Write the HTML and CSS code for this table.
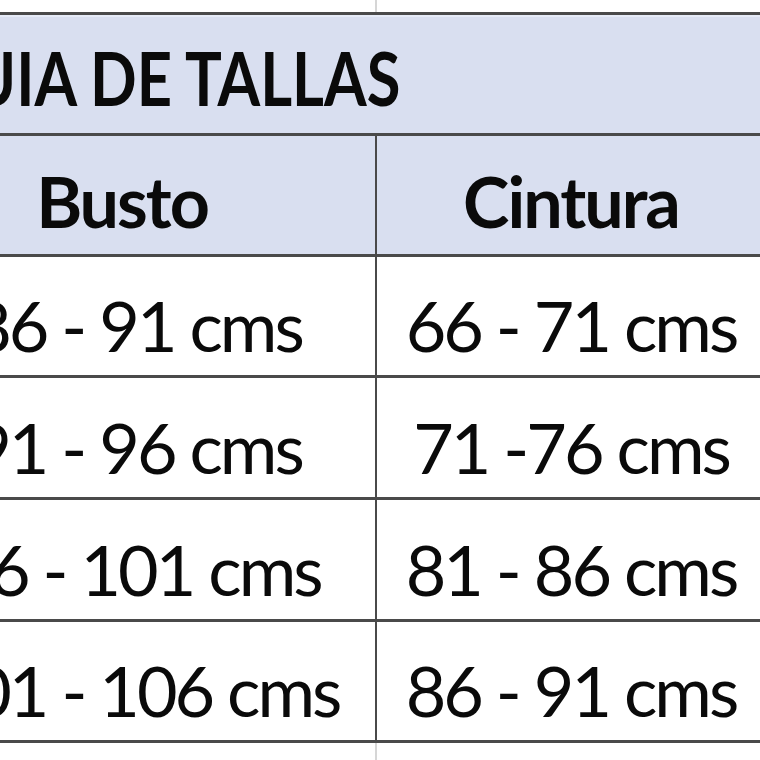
FILE: index.html
```html
<!DOCTYPE html>
<html lang="es">
<head>
<meta charset="utf-8">
<title>Guia de tallas</title>
<link rel="stylesheet" href="styles.css">
</head>
<body>
<div class="page">
  <div class="sheet">
    <div class="cell title"><span class="title-text">GUIA DE TALLAS</span></div>
    <div class="cell head head-a">Busto</div>
    <div class="cell head">Cintura</div>
    <div class="cell data">86 - 91 cms</div>
    <div class="cell data">66 - 71 cms</div>
    <div class="cell data">91 - 96 cms</div>
    <div class="cell data">71 -76 cms</div>
    <div class="cell data">96 - 101 cms</div>
    <div class="cell data">81 - 86 cms</div>
    <div class="cell data">101 - 106 cms</div>
    <div class="cell data">86 - 91 cms</div>
  </div>
</div>
</body>
</html>
```
FILE: styles.css
```css
html, body {
  margin: 0;
  padding: 0;
  background: #ffffff;
  overflow: hidden;
}

.page {
  width: 760px;
  height: 760px;
  overflow: hidden;
  background: linear-gradient(to right, transparent 375px, #d6d6d6 375px, #d6d6d6 377px, transparent 377px);
  padding-top: 12px;
  box-sizing: border-box;
}

.sheet {
  display: grid;
  grid-template-columns: 477px 388px;
  grid-template-rows: 118px 118px 118px 119px 119px 118px;
  row-gap: 3px;
  column-gap: 2px;
  padding: 3px 0;
  margin-left: -102px;
  width: max-content;
  background: #4a4a4a;
  font-family: Lato, "Open Sans", sans-serif;
  color: #0a0a0a;
}

.cell {
  display: flex;
  align-items: flex-end;
  justify-content: center;
  line-height: 1;
  background: #ffffff;
  font-size: 70px;
  letter-spacing: -2px;
  white-space: nowrap;
}

.title {
  grid-column: 1 / span 2;
  justify-content: flex-start;
  padding-left: 28px;
  padding-bottom: 18px;
  font-weight: 700;
  font-size: 74px;
  letter-spacing: 0;
  background: #d9dff0;
  box-shadow: inset 0 2px 0 #e6ebf7;
}

.title-text {
  display: inline-block;
  transform: scaleX(0.83);
  transform-origin: left bottom;
}

.head {
  font-weight: 700;
  padding-bottom: 18px;
  background: #d9dff0;
}

.head-a {
  padding-right: 29px;
}

.data {
  padding-bottom: 15px;
  letter-spacing: -3px;
}
```
